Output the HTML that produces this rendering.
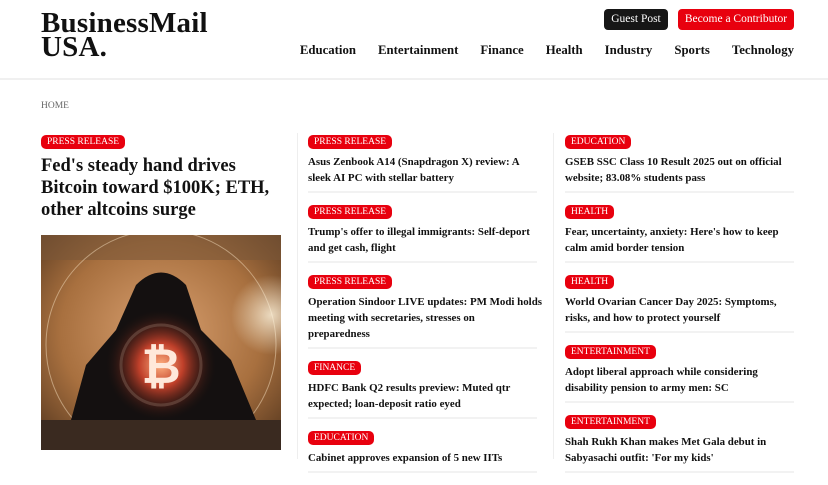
<!DOCTYPE html>
<html><head><meta charset="utf-8"><style>
*{margin:0;padding:0;box-sizing:border-box}
body{width:828px;height:459px;overflow:hidden;background:#fff;font-family:"Liberation Serif","DejaVu Serif",serif;color:#111}
.logo{position:absolute;left:41px;top:11px;font-size:29px;font-weight:bold;line-height:24px;letter-spacing:.2px}
.btn{position:absolute;top:9px;height:21px;border-radius:4px;color:#fff;font-size:11.5px;line-height:21px;text-align:center}
.nav{position:absolute;top:43px;right:34px;display:flex;font-size:12.8px;font-weight:bold}
.nav span{margin-left:22px}
.hr{position:absolute;top:78px;left:0;width:828px;height:2px;background:#f0f0f0}
.home{position:absolute;left:41px;top:101px;font-size:9.5px;color:#666}
.vd{position:absolute;top:133px;width:1px;height:326px;background:#eee}
.tag{display:table;background:#e8000e;color:#fff;font-size:9.5px;height:14px;line-height:14px;padding:0 6px;border-radius:5px}
.col{position:absolute;top:135px;width:229px}
.it{border-bottom:2px solid #f2f2f2;padding-bottom:5px;margin-bottom:12px}
.it h3{font-size:10.9px;line-height:16px;font-weight:bold;margin-top:5px;white-space:nowrap}
.big h1{font-size:18.5px;line-height:22px;font-weight:bold;margin-top:6px;white-space:nowrap}
</style></head><body>
<div class="logo">BusinessMail<br>USA.</div>
<div class="btn" style="left:604px;width:64px;background:#161616">Guest Post</div>
<div class="btn" style="left:678px;width:116px;background:#e8000e">Become a Contributor</div>
<div class="nav"><span>Education</span><span>Entertainment</span><span>Finance</span><span>Health</span><span>Industry</span><span>Sports</span><span>Technology</span></div>
<div class="hr"></div>
<div class="home">HOME</div>
<div class="vd" style="left:297px"></div>
<div class="vd" style="left:553px"></div>
<div class="col big" style="left:41px;width:240px">
<span class="tag">PRESS RELEASE</span>
<h1>Fed's steady hand drives<br>Bitcoin toward $100K; ETH,<br>other altcoins surge</h1>
</div>
<svg style="position:absolute;left:41px;top:235px" width="240" height="215" viewBox="0 0 240 215">
<defs>
<radialGradient id="bg" cx="0.5" cy="0.45" r="0.7"><stop offset="0" stop-color="#d9a070"/><stop offset="0.6" stop-color="#a8703f"/><stop offset="1" stop-color="#5a3a20"/></radialGradient>
<radialGradient id="gl" cx="0.5" cy="0.5" r="0.5"><stop offset="0" stop-color="#ffb080"/><stop offset="0.4" stop-color="#c0402a"/><stop offset="1" stop-color="#2a1510" stop-opacity="0"/></radialGradient>
<radialGradient id="rg" cx="0.5" cy="0.5" r="0.5"><stop offset="0" stop-color="#fff6e0"/><stop offset="1" stop-color="#fff6e0" stop-opacity="0"/></radialGradient>
</defs>
<rect width="240" height="215" fill="url(#bg)"/>
<rect width="240" height="25" fill="#7a5638" opacity=".6"/>
<circle cx="120" cy="110" r="115" fill="none" stroke="#f5e0c0" stroke-width="1" opacity=".5"/>
<circle cx="230" cy="80" r="40" fill="url(#rg)" opacity=".8"/>
<path d="M30 185 L45 130 L75 95 L95 50 Q120 25 145 50 L160 95 L190 125 L215 185 Z" fill="#141010"/>
<circle cx="120" cy="130" r="55" fill="url(#gl)"/>
<circle cx="120" cy="130" r="40" fill="none" stroke="#6a4a40" stroke-width="3" opacity=".7"/>
<text x="120" y="148" text-anchor="middle" font-family="Liberation Sans" font-weight="bold" font-size="48" fill="#ffe8da">₿</text>
<rect y="185" width="240" height="30" fill="#3a2a20"/>
</svg>
<div class="col" style="left:308px">
<div class="it"><span class="tag">PRESS RELEASE</span><h3>Asus Zenbook A14 (Snapdragon X) review: A<br>sleek AI PC with stellar battery</h3></div>
<div class="it"><span class="tag">PRESS RELEASE</span><h3>Trump's offer to illegal immigrants: Self-deport<br>and get cash, flight</h3></div>
<div class="it"><span class="tag">PRESS RELEASE</span><h3>Operation Sindoor LIVE updates: PM Modi holds<br>meeting with secretaries, stresses on<br>preparedness</h3></div>
<div class="it"><span class="tag">FINANCE</span><h3>HDFC Bank Q2 results preview: Muted qtr<br>expected; loan-deposit ratio eyed</h3></div>
<div class="it"><span class="tag">EDUCATION</span><h3>Cabinet approves expansion of 5 new IITs</h3></div>
</div>
<div class="col" style="left:565px">
<div class="it"><span class="tag">EDUCATION</span><h3>GSEB SSC Class 10 Result 2025 out on official<br>website; 83.08% students pass</h3></div>
<div class="it"><span class="tag">HEALTH</span><h3>Fear, uncertainty, anxiety: Here's how to keep<br>calm amid border tension</h3></div>
<div class="it"><span class="tag">HEALTH</span><h3>World Ovarian Cancer Day 2025: Symptoms,<br>risks, and how to protect yourself</h3></div>
<div class="it"><span class="tag">ENTERTAINMENT</span><h3>Adopt liberal approach while considering<br>disability pension to army men: SC</h3></div>
<div class="it"><span class="tag">ENTERTAINMENT</span><h3>Shah Rukh Khan makes Met Gala debut in<br>Sabyasachi outfit: 'For my kids'</h3></div>
</div>
</body></html>
